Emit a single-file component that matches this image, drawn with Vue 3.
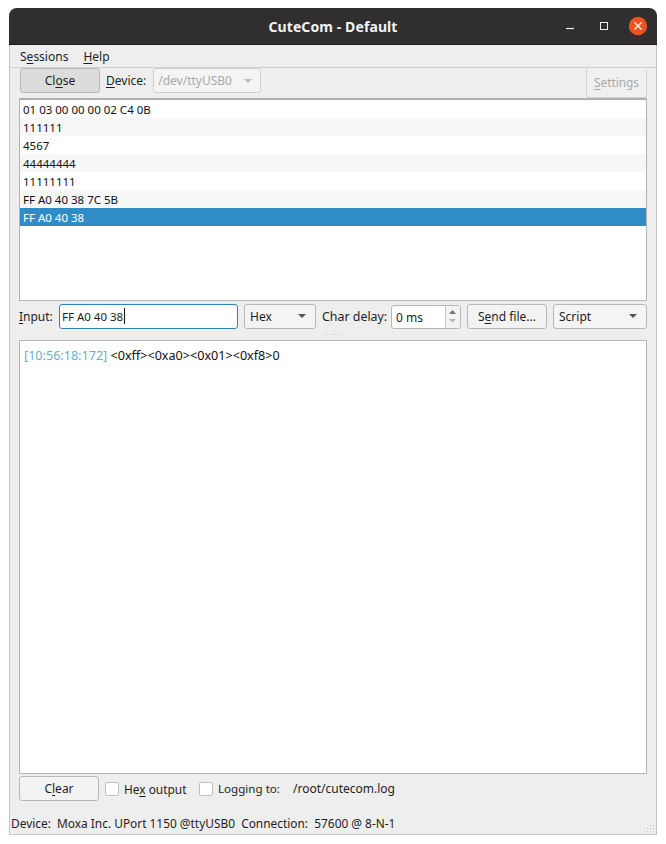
<script setup>
const rows = ['01 03 00 00 00 02 C4 0B', '111111', '4567', '44444444', '11111111', 'FF A0 40 38 7C 5B', 'FF A0 40 38']
</script>

<template>
  <div class="window">
    <header class="titlebar">
      <span class="title">CuteCom - Default</span>
      <div class="controls">
        <svg class="wbtn" width="16" height="16" viewBox="0 0 16 16"><path d="M6 10.5h8" stroke="#e8e8e8" stroke-width="1.2" /></svg>
        <svg class="wbtn" width="16" height="16" viewBox="0 0 16 16"><rect x="6.5" y="4.5" width="7" height="7" fill="none" stroke="#eee" stroke-width="1" /></svg>
        <svg class="wbtn" width="20" height="20" viewBox="0 0 20 20"><circle cx="10" cy="10" r="9.2" fill="#e95420" /><path d="M6.5 6.5l7 7M13.5 6.5l-7 7" stroke="#fff" stroke-width="1.2" /></svg>
      </div>
    </header>
    <nav class="menubar">
      <span>S<u>e</u>ssions</span>
      <span><u>H</u>elp</span>
    </nav>
    <main class="body">
      <div class="toolbar">
        <button class="btn close-btn">Cl<u>o</u>se</button>
        <label class="device-label"><u>D</u>evice:</label>
        <div class="combo device-combo"><span>/dev/ttyUSB0</span><i class="arrow light"></i></div>
        <div class="spacer"></div>
        <button class="btn settings-btn"><u>S</u>ettings</button>
      </div>
      <ul class="history">
        <li v-for="(r, i) in rows" :key="i" :class="{ alt: i % 2 === 1, sel: i === rows.length - 1 }">{{ r }}</li>
      </ul>
      <div class="inputrow">
        <label class="input-label"><u>I</u>nput:</label>
        <div class="input"><span>FF A0 40 38</span><b class="caret"></b></div>
        <div class="combo hex"><span>Hex</span><i class="arrow"></i></div>
        <label class="delay-label">Char delay:</label>
        <div class="spin">
          <span class="spin-text">0 ms</span>
          <div class="spin-btns">
            <svg width="13" height="22" viewBox="0 0 13 22"><path d="M3 8L6.5 4L10 8z" fill="#777" /><path d="M3 13h7l-3.5 3.5z" fill="#b5b5b5" /></svg>
          </div>
        </div>
        <button class="btn send">S<u>e</u>nd file...</button>
        <div class="combo script"><span>Script</span><i class="arrow"></i></div>
      </div>
      <div class="splitter"><span v-for="n in 7" :key="n"></span></div>
      <div class="output">
        <span class="stamp">[10:56:18:172]</span> &lt;0xff&gt;&lt;0xa0&gt;&lt;0x01&gt;&lt;0xf8&gt;0
      </div>
      <div class="bottomrow">
        <button class="btn clear">C<u>l</u>ear</button>
        <i class="check"></i>
        <span class="hexout">He<u>x</u> output</span>
        <i class="check"></i>
        <span class="logging">Logging to:</span>
        <span class="logpath">/root/cutecom.log</span>
      </div>
    </main>
    <footer class="status">
      <span>Device:&nbsp; Moxa Inc. UPort 1150 @ttyUSB0&nbsp; Connection:&nbsp; 57600 @ 8-N-1</span>
      <svg class="grip" width="11" height="11" viewBox="0 0 11 11" fill="#c4c4c4">
        <rect x="9" y="0" width="1" height="1" /><rect x="6" y="3" width="1" height="1" /><rect x="9" y="3" width="1" height="1" />
        <rect x="3" y="6" width="1" height="1" /><rect x="6" y="6" width="1" height="1" /><rect x="9" y="6" width="1" height="1" />
        <rect x="0" y="9" width="1" height="1" /><rect x="3" y="9" width="1" height="1" /><rect x="6" y="9" width="1" height="1" /><rect x="9" y="9" width="1" height="1" />
      </svg>
    </footer>
  </div>
</template>

<style>
html, body { background: #fff; margin: 0; }
</style>

<style scoped>
.window {
  box-sizing: border-box;
  width: 648px;
  height: 827px;
  margin: 8px 0 0 9px;
  background: #eee;
  border: 1px solid #c4c4c4;
  border-top: none;
  border-radius: 8px 8px 0 0;
  display: flex;
  flex-direction: column;
  font: 12px "Noto Sans", sans-serif;
  color: #1e1e1e;
}
u { text-underline-offset: 2px; text-decoration-thickness: 1px; }
.titlebar {
  height: 37px;
  flex: none;
  box-sizing: border-box;
  margin: 0 -1px;
  background: #302e2e;
  border-bottom: 1px solid #1e1c1c;
  border-radius: 8px 8px 0 0;
  display: flex;
  align-items: center;
  justify-content: center;
  position: relative;
}
.title { color: #f2f2f2; font: bold 14px "Noto Sans", sans-serif; letter-spacing: 0.1px; }
.controls {
  position: absolute;
  right: 9px;
  top: 8px;
  display: flex;
  align-items: center;
  gap: 18px;
}
.wbtn { display: block; }
.menubar {
  height: 23px;
  flex: none;
  box-sizing: border-box;
  border-bottom: 1px solid #d0d0d0;
  display: flex;
  align-items: center;
  gap: 15px;
  padding-left: 10px;
}
.body {
  flex: 1;
  min-height: 0;
  display: flex;
  flex-direction: column;
  padding: 0 9px;
}
.toolbar {
  height: 30px;
  flex: none;
  display: flex;
  align-items: flex-start;
}
.btn {
  box-sizing: border-box;
  background: #f3f3f3;
  border: 1px solid #b8b8b8;
  border-radius: 3px;
  font: inherit;
  color: inherit;
  padding: 0;
  text-align: center;
}
.close-btn {
  width: 80px;
  height: 25px;
  margin-left: 1px;
  background: #dcdcdc;
}
.device-label { margin-left: 6px; line-height: 25px; }
.combo {
  box-sizing: border-box;
  background: #f4f4f4;
  border: 1px solid #b8b8b8;
  border-radius: 3px;
  display: flex;
  align-items: center;
  justify-content: space-between;
  padding: 0 9px 0 5px;
}
.device-combo {
  width: 108px;
  height: 25px;
  margin-left: 7px;
  color: #a9a9a9;
  border-color: #d0d0d0;
  padding-left: 4px;
  padding-right: 8px;
}
.arrow {
  width: 0;
  height: 0;
  border-left: 4px solid transparent;
  border-right: 4px solid transparent;
  border-top: 4px solid #555;
}
.arrow.light { border-top-color: #bbb; }
.spacer { flex: 1; }
.settings-btn {
  width: 61px;
  height: 30px;
  color: #a9a9a9;
  border-color: #d4d4d4;
  border-top: none;
  background: #f0f0f0;
  font-size: 11.8px;
  padding-bottom: 2px;
}
.history {
  box-sizing: border-box;
  height: 203px;
  flex: none;
  list-style: none;
  margin: 0;
  padding: 0;
  background: #fff;
  border: 1px solid #b4b4b4;
  border-top: 2px solid #b0b0b0;
  font-size: 11.5px;
}
.history li {
  height: 18px;
  line-height: 20px;
  padding-left: 3px;
  color: #111;
}
.history li.alt { background: #f7f7f7; }
.history li.sel { background: #308cc6; color: #fff; }
.inputrow {
  height: 32px;
  box-sizing: border-box;
  flex: none;
  display: flex;
  align-items: center;
  padding-bottom: 2px;
}
.input-label { width: 40px; }
.input {
  box-sizing: border-box;
  width: 179px;
  height: 25px;
  background: #fff;
  border: 1px solid #2f82b8;
  border-radius: 3px;
  padding-left: 2px;
  display: flex;
  align-items: center;
  font-size: 11.5px;
}
.caret { width: 1px; height: 16px; background: #111; margin-left: 1px; }
.hex { width: 72px; height: 25px; margin-left: 6px; }
.delay-label { margin-left: 6px; width: 69px; white-space: nowrap; font-size: 12.4px; }
.spin {
  box-sizing: border-box;
  width: 70px;
  height: 24px;
  margin-top: 2px;
  background: #fff;
  border: 1px solid #b8b8b8;
  border-radius: 3px;
  display: flex;
  justify-content: space-between;
  align-items: center;
  padding-left: 4px;
}
.spin-btns {
  width: 14px;
  height: 22px;
  background: #f3f3f3;
  border-left: 1px solid #c8c8c8;
  border-radius: 0 2px 2px 0;
}
.spin-btns svg { display: block; }
.send { width: 80px; height: 25px; margin-left: 6px; }
.script { width: 94px; height: 25px; margin-left: 6px; }
.splitter {
  height: 7px;
  box-sizing: border-box;
  padding-top: 1px;
  flex: none;
  display: flex;
  justify-content: center;
  align-items: flex-start;
  gap: 2px;
  padding-right: 2px;
}
.splitter span { width: 1px; height: 1px; background: #c6c6c6; }
.output {
  box-sizing: border-box;
  height: 434px;
  flex: none;
  background: #fff;
  border: 1px solid #b4b4b4;
  padding: 6px 4px;
  color: #111;
  line-height: 18px;
  font-size: 12.6px;
}
.stamp { color: #6aaecb; }
.bottomrow {
  height: 32px;
  box-sizing: border-box;
  flex: none;
  display: flex;
  align-items: center;
  padding-bottom: 3px;
}
.clear { width: 80px; height: 25px; }
.check {
  box-sizing: border-box;
  width: 14px;
  height: 14px;
  background: #fff;
  border: 1px solid #c0c0c0;
  border-radius: 2px;
  margin-left: 6px;
}
.hexout { margin-left: 5px; width: 69px; white-space: nowrap; font-size: 11.9px; }
.logging { margin-left: 5px; width: 69px; white-space: nowrap; font-size: 11.6px; }
.logpath { margin-left: 6px; }
.status {
  height: 26px;
  flex: none;
  position: relative;
  box-sizing: border-box;
  padding: 6px 0 0 1px;
  line-height: 18px;
  font-size: 11.9px;
}
.grip { position: absolute; right: 1px; bottom: 1px; }
</style>
